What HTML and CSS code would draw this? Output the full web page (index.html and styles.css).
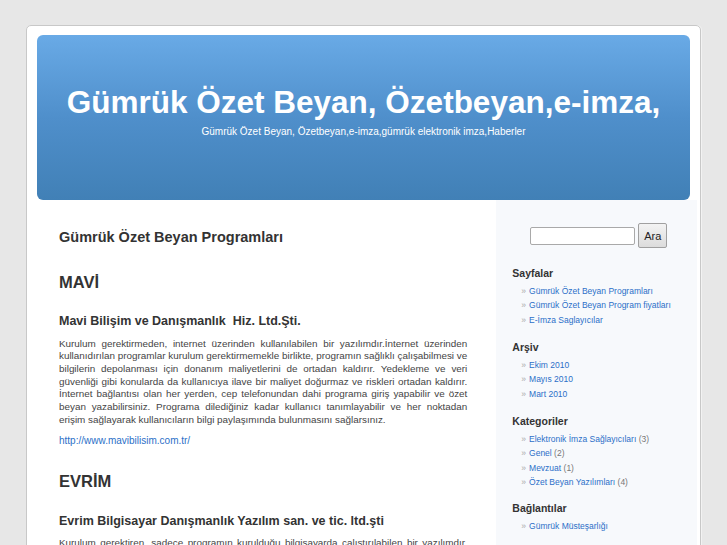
FILE: index.html
```html
<!DOCTYPE html>
<html lang="tr">
<head>
<meta charset="utf-8">
<title>Gümrük Özet Beyan</title>
<link rel="stylesheet" href="styles.css">
</head>
<body>
<div class="page">
  <header class="header">
    <h1 class="site-title">Gümrük Özet Beyan, Özetbeyan,e-imza,</h1>
    <div class="site-desc">Gümrük Özet Beyan, Özetbeyan,e-imza,gümrük elektronik imza,Haberler</div>
  </header>
  <div class="columns">
    <main class="content">
      <h2 class="post-title">Gümrük Özet Beyan Programları</h2>
      <h2 class="section">MAVİ</h2>
      <h3 class="company">Mavi Bilişim ve Danışmanlık&nbsp; Hiz. Ltd.Şti.</h3>
      <p class="text">Kurulum gerektirmeden, internet üzerinden kullanılabilen bir yazılımdır.İnternet üzerinden kullanıdırılan programlar kurulum gerektirmemekle birlikte, programın sağlıklı çalışabilmesi ve bilgilerin depolanması için donanım maliyetlerini de ortadan kaldırır. Yedekleme ve veri güvenliği gibi konularda da kullanıcıya ilave bir maliyet doğurmaz ve riskleri ortadan kaldırır. İnternet bağlantısı olan her yerden, cep telefonundan dahi programa giriş yapabilir ve özet beyan yazabilirsiniz. Programa dilediğiniz kadar kullanıcı tanımlayabilir ve her noktadan erişim sağlayarak kullanıcıların bilgi paylaşımında bulunmasını sağlarsınız.</p>
      <p class="link-line"><a href="#">http://www.mavibilisim.com.tr/</a></p>
      <h2 class="section section-2">EVRİM</h2>
      <h3 class="company">Evrim Bilgisayar Danışmanlık Yazılım san. ve tic. ltd.şti</h3>
      <p class="text">Kurulum gerektiren, sadece programın kurulduğu bilgisayarda çalıştırılabilen bir yazılımdır. Programın kurulu olduğu bilgisayar dışında kullanılamaz.</p>
    </main>
    <aside class="sidebar">
      <form class="search">
        <input class="search-input" type="text">
        <button class="search-btn" type="button">Ara</button>
      </form>
      <h4 class="widget-title">Sayfalar</h4>
      <ul class="widget-list">
        <li><a href="#">Gümrük Özet Beyan Programları</a></li>
        <li><a href="#">Gümrük Özet Beyan Program fiyatları</a></li>
        <li><a href="#">E-İmza Saglayıcılar</a></li>
      </ul>
      <h4 class="widget-title">Arşiv</h4>
      <ul class="widget-list">
        <li><a href="#">Ekim 2010</a></li>
        <li><a href="#">Mayıs 2010</a></li>
        <li><a href="#">Mart 2010</a></li>
      </ul>
      <h4 class="widget-title">Kategoriler</h4>
      <ul class="widget-list">
        <li><a href="#">Elektronik İmza Sağlayıcıları</a> <span class="count">(3)</span></li>
        <li><a href="#">Genel</a> <span class="count">(2)</span></li>
        <li><a href="#">Mevzuat</a> <span class="count">(1)</span></li>
        <li><a href="#">Özet Beyan Yazılımları</a> <span class="count">(4)</span></li>
      </ul>
      <h4 class="widget-title widget-last">Bağlantılar</h4>
      <ul class="widget-list">
        <li><a href="#">Gümrük Müsteşarlığı</a></li>
      </ul>
    </aside>
  </div>
</div>
</body>
</html>
```
FILE: styles.css
```css
html, body {
  margin: 0;
  padding: 0;
  background: #e7e7e7;
  font-family: "Liberation Sans", Arial, sans-serif;
  color: #333;
}
body {
  padding-top: 25px;
  overflow: hidden;
  height: 520px;
}
.page {
  margin-left: 26px;
  width: 673px;
  background: #fff;
  border: 1px solid #c8c8c8;
  border-radius: 5px;
  box-shadow: 1px 0 0 #f2f2f2;
  padding-top: 9px;
}
.header {
  margin: 0 10px 0 10px;
  height: 165px;
  border-radius: 6px;
  background: linear-gradient(to bottom, #69aae6 0%, #4f8fcb 50%, #4180b6 100%);
  text-align: center;
  color: #fff;
  overflow: hidden;
}
.site-title {
  margin: 0;
  padding-top: 48px;
  font-size: 31.5px;
  line-height: 38px;
  font-weight: bold;
  letter-spacing: 0;
}
.site-desc {
  margin-top: 4px;
  font-size: 10px;
  line-height: 13px;
}
.columns {
  display: flex;
  align-items: stretch;
}
.content {
  width: 409px;
  padding: 28px 29px 0 32px;
}
.post-title {
  margin: 0;
  font-size: 14.5px;
  line-height: 18px;
  font-weight: bold;
  color: #333;
}
.section {
  margin: 26px 0 0 0;
  font-size: 16.5px;
  line-height: 20px;
  font-weight: bold;
  color: #333;
}
.section-2 {
  margin-top: 23.5px;
}
.company {
  margin: 21px 0 0 0;
  font-size: 12.5px;
  line-height: 16px;
  font-weight: bold;
  color: #333;
}
.section-2 + .company {
  margin-top: 22px;
}
.text {
  margin: 8.6px 0 0 0;
  font-size: 9.9px;
  line-height: 12.7px;
  text-align: justify;
  color: #444;
}
.link-line {
  margin: 8px 0 0 0;
  font-size: 10px;
  line-height: 12.7px;
}
a {
  color: #2b6fc8;
  text-decoration: none;
}
.sidebar {
  width: 185px;
  margin-right: 3px;
  padding: 23px 0 0 16px;
  background: #f7f9fc;
  min-height: 340px;
}
.search {
  display: flex;
  align-items: center;
  gap: 3px;
  margin-left: 18px;
  height: 25px;
}
.search-input {
  width: 105px;
  height: 18px;
  box-sizing: border-box;
  border: 1px solid #a9a9a9;
  border-radius: 2px;
  background: #fff;
  margin: 0;
  padding: 0;
}
.search-btn {
  width: 29px;
  height: 25px;
  box-sizing: border-box;
  border: 1px solid #a0a0a0;
  border-radius: 2px;
  background: linear-gradient(to bottom, #f3f3f3, #dcdcdc);
  font-family: "Liberation Sans", Arial, sans-serif;
  font-size: 11px;
  color: #222;
  padding: 0;
  margin: 0;
}
.widget-title {
  margin: 18px 0 0 0;
  font-size: 10.5px;
  line-height: 14px;
  font-weight: bold;
  color: #333;
}
.widget-list + .widget-title {
  margin-top: 12.75px;
}
.widget-list + .widget-last {
  margin-top: 11px;
}
.widget-list {
  list-style: none;
  margin: 3.75px 0 0 0;
  padding: 0 0 0 9px;
  font-size: 8.5px;
  line-height: 14.5px;
}
.widget-list li {
  font-size: 8.5px;
  line-height: 14.5px;
  height: 14.5px;
  white-space: nowrap;
}
.widget-list li::before {
  content: "»";
  color: #aaa;
  margin-right: 3px;
}
.count {
  color: #777;
}
```
